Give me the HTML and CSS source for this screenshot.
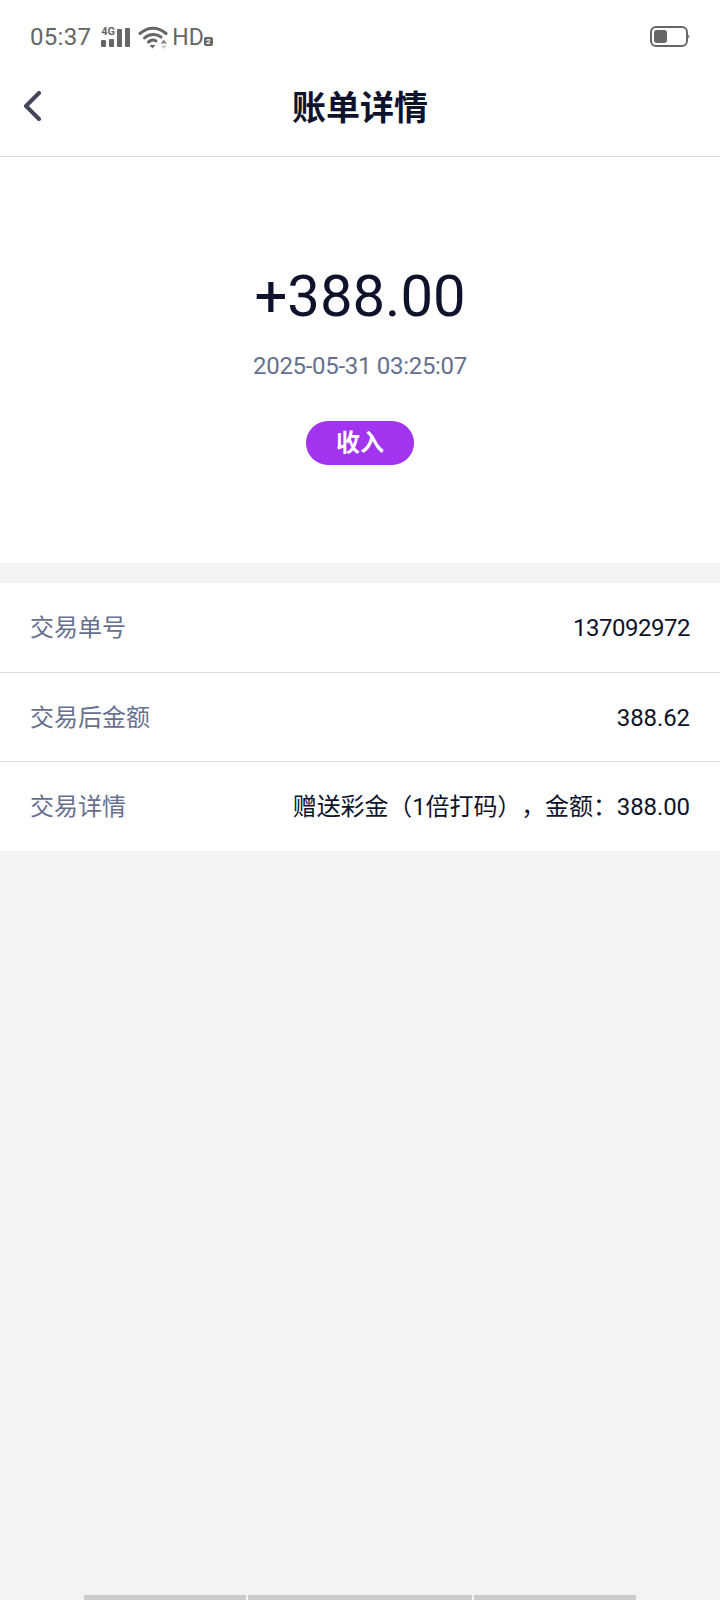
FILE: index.html
```html
<!DOCTYPE html>
<html lang="zh-CN">

<head>
  <meta charset="UTF-8">
  <meta name="viewport" content="width=device-width, initial-scale=1.0">
  <title>账单详情</title>
  <link rel="stylesheet" href="styles.css">
</head>

<body>
  <div class="page">
    <!-- 状态栏 -->
    <div class="status-bar">
      <div class="status-left">
        <span class="time">05:37</span>
        <span class="signal">
          <span class="signal-label">4G</span>
          <svg class="signal-bars" width="30" height="19" viewBox="0 0 30 19">
            <rect x="0" y="12" width="5" height="7" rx="1"></rect>
            <rect x="8" y="11" width="5" height="8" rx="1"></rect>
            <rect x="16" y="1" width="5" height="18" rx="1"></rect>
            <rect x="24" y="0" width="5" height="19" rx="1"></rect>
          </svg>
        </span>
        <svg class="wifi" width="30" height="24" viewBox="0 0 30 24">
          <path d="M2 8.500C10 1.500 20 1.500 28 8.500" fill="none" stroke="#666" stroke-width="3" stroke-linecap="round"></path>
          <path d="M6.500 13C11.500 8.500 18.500 8.500 23 12" fill="none" stroke="#666" stroke-width="3" stroke-linecap="round"></path>
          <path d="M10.500 17C13 14.800 16 14.800 18 16" fill="none" stroke="#666" stroke-width="3" stroke-linecap="round"></path>
          <path d="M11.500 20H17.500L14.500 23.500Z" fill="#666"></path>
          <path d="M22.500 18.500H29L25.750 14.500Z" fill="#888"></path>
          <path d="M22.500 20.500H29L25.750 24Z" fill="#ccc"></path>
        </svg>
        <span class="hd">HD</span>
        <span class="sim">2</span>
      </div>
      <svg class="battery" width="40" height="22" viewBox="0 0 40 22">
        <rect x="1" y="1" width="36" height="19" rx="5" fill="none" stroke="#666" stroke-width="2"></rect>
        <rect x="4" y="4" width="13" height="13" rx="3" fill="#666"></rect>
        <path d="M38 8.500L40 10.500L38 12.500Z" fill="#888"></path>
      </svg>
    </div>

    <!-- 标题栏 -->
    <div class="nav-bar">
      <svg class="back" width="20" height="30" viewBox="0 0 20 30">
        <path d="M17 2L4 15L17 28" fill="none" stroke="#44445a" stroke-width="4" stroke-linecap="round" stroke-linejoin="round"></path>
      </svg>
      <h1 class="nav-title">账单详情</h1>
    </div>

    <div class="summary">
      <div class="amount">+388.00</div>
      <div class="date">2025-05-31 03:25:07</div>
      <div class="tag">收入</div>
    </div>

    <ul class="detail-list">
      <li class="detail-row">
        <span class="detail-label">交易单号</span>
        <span class="detail-value detail-id">137092972</span>
      </li>
      <li class="detail-row">
        <span class="detail-label">交易后金额</span>
        <span class="detail-value">388.62</span>
      </li>
      <li class="detail-row">
        <span class="detail-label">交易详情</span>
        <span class="detail-value">赠送彩金（1倍打码），金额：388.00</span>
      </li>
    </ul>

    <!-- 底部手势条 -->
    <div class="home-bar">
      <span class="home-seg home-seg-side"></span>
      <span class="home-seg home-seg-mid"></span>
      <span class="home-seg home-seg-side"></span>
    </div>
  </div>
</body>

</html>
```

FILE: styles.css
```css
* {
  margin: 0;
  padding: 0;
  box-sizing: border-box;
}

html,
body {
  width: 720px;
  height: 1600px;
  overflow: hidden;
}

body {
  background-color: #f2f3f5;
  font-family: Roboto, "Noto Sans CJK SC", sans-serif;
  text-spacing-trim: space-all;
}

.page {
  display: flex;
  flex-direction: column;
  height: 1600px;
}

/* 状态栏 */
.status-bar {
  display: flex;
  justify-content: space-between;
  align-items: center;
  height: 72px;
  padding: 2px 30px 0 30px;
  background-color: #fff;
}

.status-left {
  display: flex;
  align-items: center;
  color: #666;
}

.time {
  font-size: 24px;
  letter-spacing: 0.3px;
  margin-right: 10px;
}

.signal {
  display: block;
  position: relative;
  width: 30px;
  height: 19px;
  margin-right: 7px;
}

.signal-bars {
  display: block;
  fill: #666;
}

.signal-label {
  position: absolute;
  left: 0;
  top: 0;
  font-size: 11px;
  font-weight: 700;
  line-height: 8px;
}

.wifi {
  margin-right: 4px;
}

.hd {
  font-size: 23px;
}

.sim {
  display: block;
  width: 9px;
  height: 9px;
  margin-top: 8px;
  border-radius: 2px;
  background-color: #666;
  color: #fff;
  font-size: 8px;
  font-weight: 700;
  line-height: 9px;
  text-align: center;
}

/* 标题栏 */
.nav-bar {
  display: flex;
  justify-content: center;
  align-items: center;
  position: relative;
  height: 85px;
  padding-bottom: 17px;
  background-color: #fff;
  border-bottom: 1px solid #dedee2;
}

.back {
  position: absolute;
  left: 22px;
  top: 19px;
}

.nav-title {
  font-size: 34px;
  font-weight: 700;
  color: #0e132b;
}

/* 金额 */
.summary {
  display: flex;
  flex-direction: column;
  align-items: center;
  height: 406px;
  padding-top: 105px;
  background-color: #fff;
}

.amount {
  font-size: 58px;
  line-height: 68px;
  color: #0e132b;
}

.date {
  margin-top: 21px;
  font-size: 24px;
  line-height: 30px;
  letter-spacing: -0.3px;
  color: #67708f;
}

.tag {
  width: 108px;
  height: 44px;
  margin-top: 40px;
  border-radius: 22px;
  background-color: #a233ee;
  color: #fff;
  font-size: 24px;
  font-weight: 700;
  line-height: 44px;
  text-align: center;
}

/* 明细 */
.detail-list {
  list-style: none;
  margin-top: 20px;
  background-color: #fff;
}

.detail-row {
  display: flex;
  justify-content: space-between;
  align-items: center;
  height: 89.5px;
  padding: 2px 30px 0;
  font-size: 24px;
  line-height: 34px;
  border-bottom: 1px solid #dedee2;
}

.detail-row:last-child {
  height: 89px;
  border-bottom-color: transparent;
}

.detail-label {
  color: #67708f;
}

.detail-value {
  letter-spacing: -0.1px;
  color: #0e132b;
}

.detail-id {
  letter-spacing: -0.5px;
}

/* 手势条 */
.home-bar {
  display: flex;
  justify-content: center;
  gap: 2px;
  margin-top: auto;
}

.home-seg {
  height: 5px;
  background-color: #cbcbce;
}

.home-seg-side {
  width: 162px;
}

.home-seg-mid {
  width: 224px;
}
```
